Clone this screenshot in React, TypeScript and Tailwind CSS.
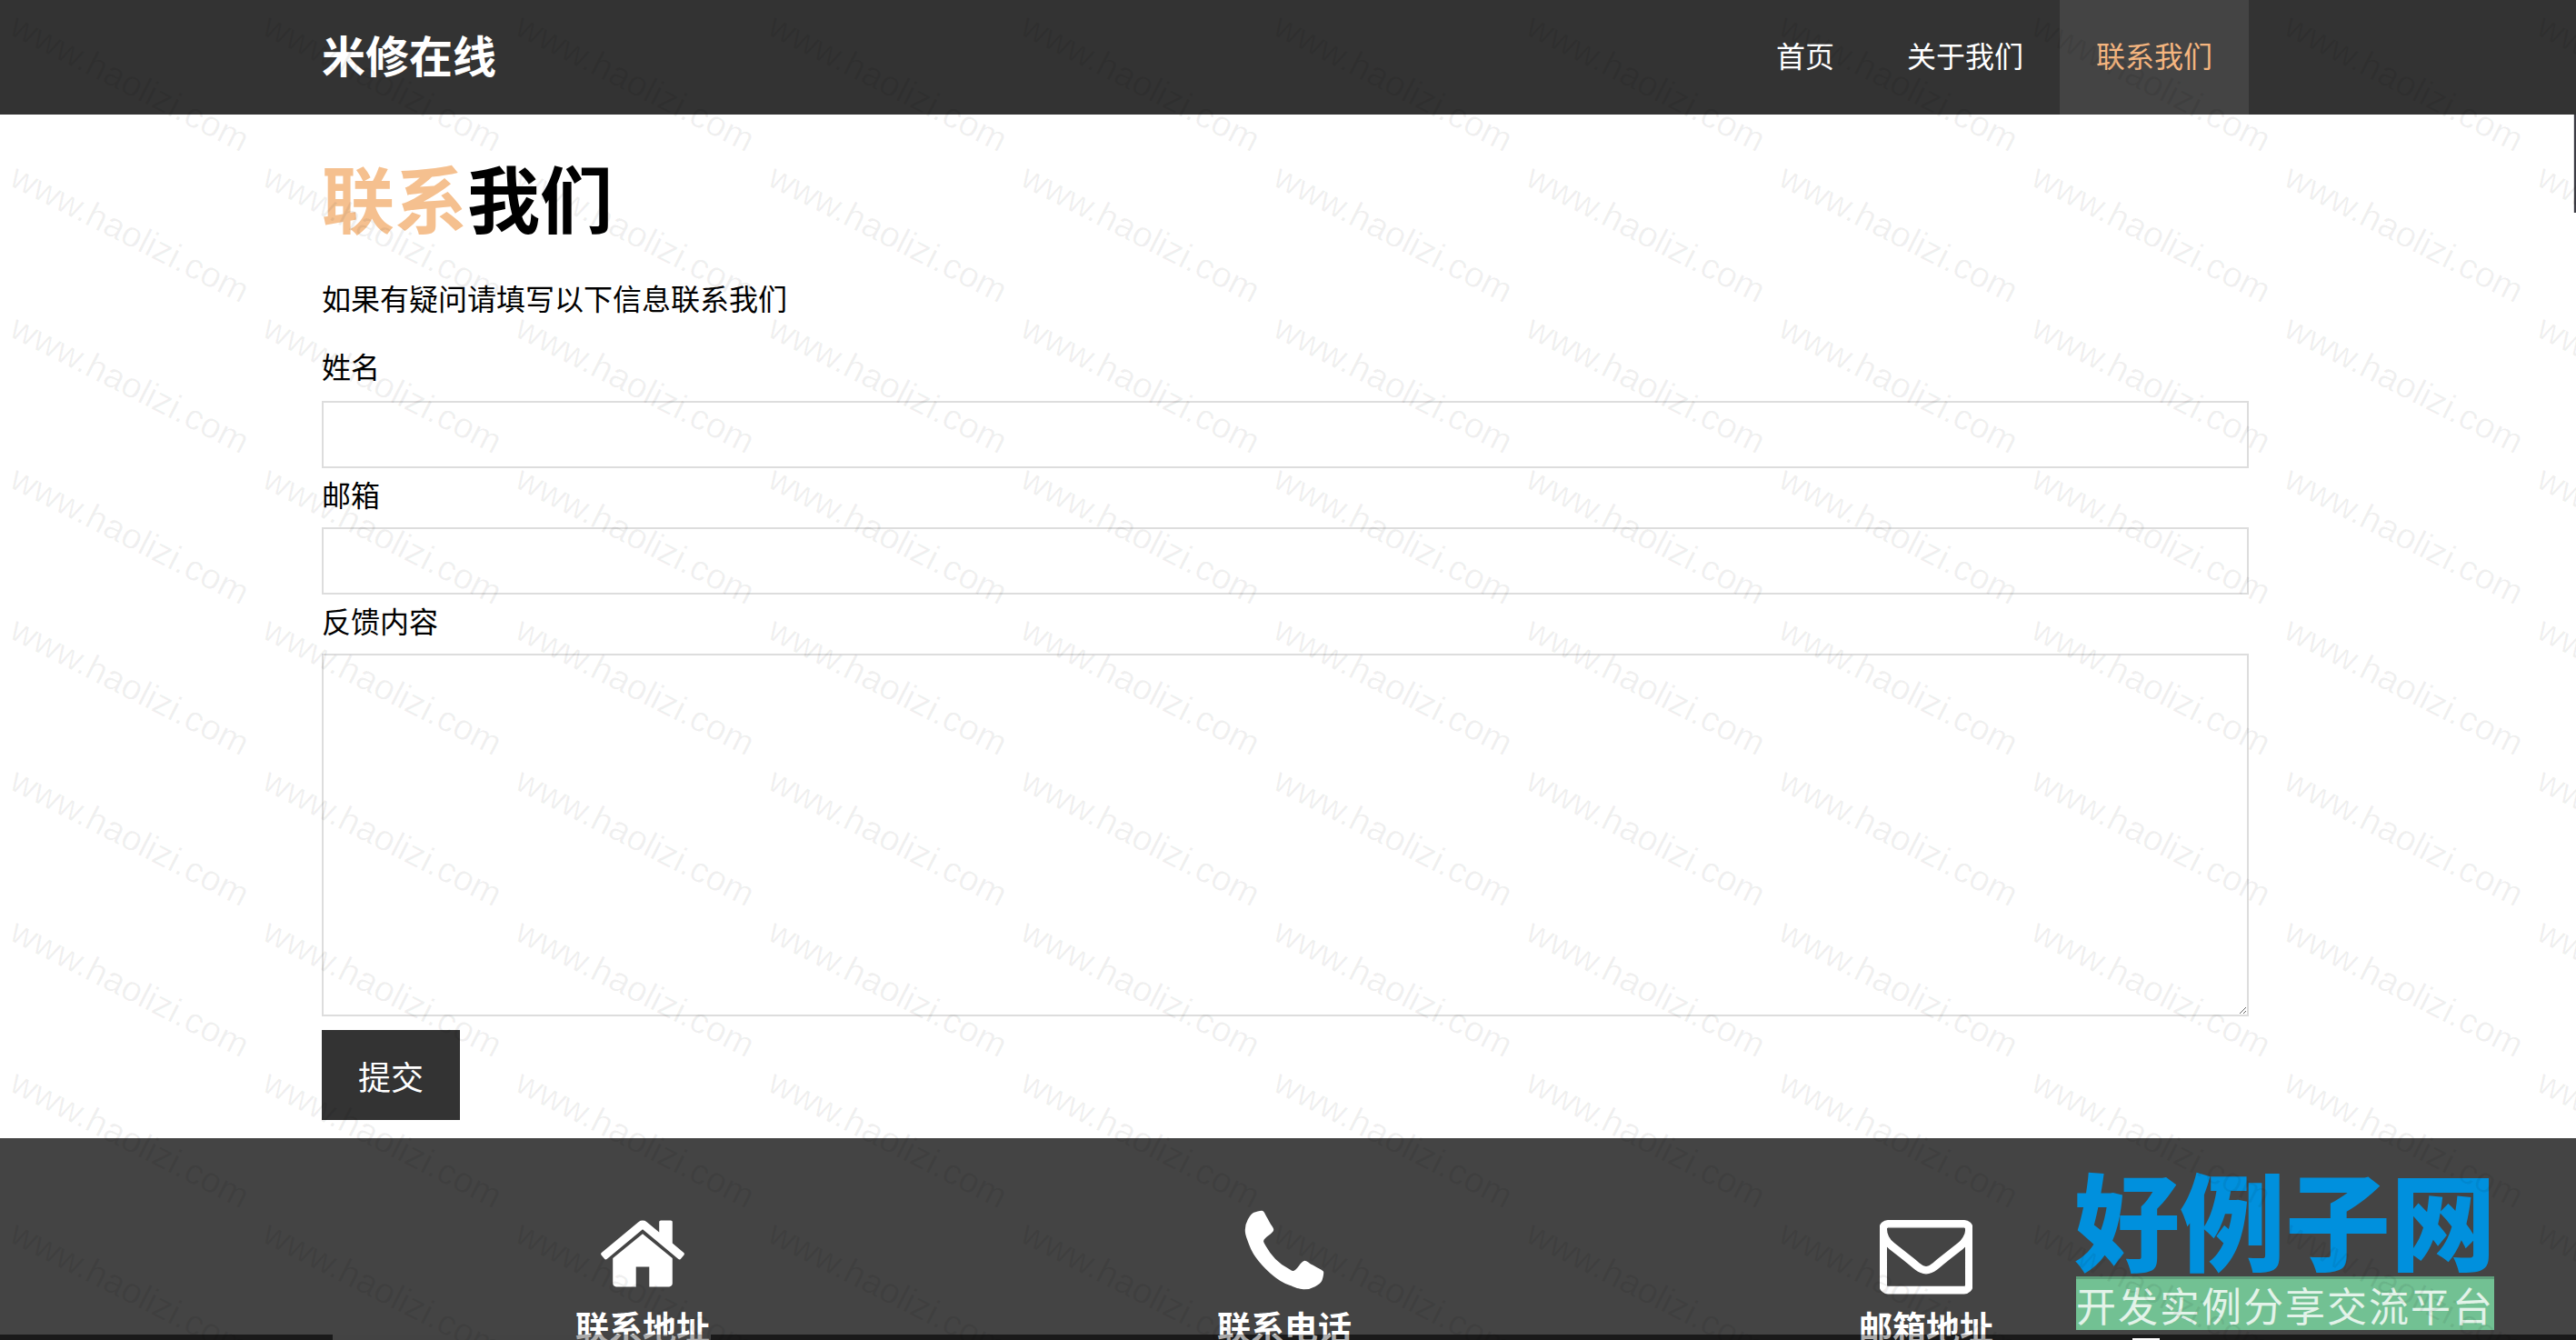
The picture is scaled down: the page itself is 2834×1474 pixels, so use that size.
const marks = Array.from({ length: 99 }, (_, i) => i)

function HomeIcon() {
  return (
    <svg viewBox="0 0 1792 1792" className="w-[102px] h-[102px] fill-white">
      <path d="M1472 992v480q0 26-19 45t-45 19h-384v-384h-256v384h-384q-26 0-45-19t-19-45v-480q0-1 .5-3t.5-3l575-474 575 474q1 2 1 6zm223-69l-62 74q-8 9-21 11h-3q-13 0-21-7l-692-577-692 577q-12 8-24 7-13-2-21-11l-62-74q-8-10-7-23.500t11-21.500l719-599q32-26 76-26t76 26l244 204v-195q0-14 9-23t23-9h192q14 0 23 9t9 23v408l219 182q10 8 11 21.500t-7 23.500z" />
    </svg>
  )
}

function PhoneIcon() {
  return (
    <svg viewBox="0 0 1792 1792" className="w-[110px] h-[110px] fill-white">
      <path d="M1600 1240q0 27-10 70.500t-21 68.500q-21 50-122 106-94 51-186 51-27 0-53-3.500t-57.500-12.500-47-14.500-55.500-20.500-49-18q-98-35-175-83-127-79-264-216t-216-264q-48-77-83-175-3-9-18-49t-20.500-55.500-14.500-47-12.500-57.500-3.500-53q0-92 51-186 56-101 106-122 25-11 68.500-21t70.500-10q14 0 21 3 18 6 53 76 11 19 30 54t35 63.500 31 53.500q3 4 17.500 25t21.500 35.500 7 28.500q0 20-28.500 50t-62 55-62 53-28.500 46q0 9 5 22.500t8.500 20.500 14 24 11.500 19q76 137 174 235t235 174q2 1 19 11.500t24 14 20.500 8.500 22.500 5q18 0 46-28.500t53-62 55-62 50-28.500q14 0 28.500 7t35.500 21.500 25 17.500q25 15 53.500 31t63.500 35 54 30q70 35 76 53 3 7 3 21z" />
    </svg>
  )
}

function EnvelopeIcon() {
  return (
    <svg viewBox="0 0 1792 1792" className="w-[102px] h-[102px] fill-white stroke-white stroke-[24]">
      <path d="M1664 1504v-768q-32 36-69 66-268 206-426 338-51 43-83 67t-86.500 48.500-102.500 24.500h-2q-48 0-102.500-24.500t-86.500-48.500-83-67q-158-132-426-338-37-30-69-66v768q0 13 9.500 22.500t22.500 9.500h1472q13 0 22.500-9.500t9.500-22.500zm0-1051v-24.500l-.5-13-3-12.500-5.500-9-9-7.500-14-2.500h-1472q-13 0-22.500 9.500t-9.500 22.500q0 168 147 284 193 152 401 317 6 5 35 29.500t46 37.500 44.500 31.500 50.500 27.500 43 9h2q20 0 43-9t50.500-27.500 44.500-31.500 46-37.500 35-29.500q208-165 401-317 54-43 100.500-115.500t46.500-131.500zm128-37v1088q0 66-47 113t-113 47h-1472q-66 0-113-47t-47-113v-1088q0-66 47-113t113-47h1472q66 0 113 47t47 113z" />
    </svg>
  )
}

function Nav() {
  return (
    <header className="bg-[#333] pr-[6px]">
      <div className="mx-auto w-[2120px] h-[126px] flex items-center justify-between">
        <span className="text-white text-[48px] leading-[60px] font-bold pb-[8px]">米修在线</span>
        <nav className="flex h-full text-[32px] text-white">
          <a className="px-[40px] pb-[7px] flex items-center">首页</a>
          <a className="px-[40px] pb-[7px] flex items-center">关于我们</a>
          <a className="px-[40px] pb-[7px] flex items-center bg-[#444] text-[#f4b57f]">联系我们</a>
        </nav>
      </div>
    </header>
  )
}

function ContactForm() {
  const field = "block w-full h-[74px] border-2 border-[#ddd] bg-white"
  return (
    <main className="pr-[6px]">
      <div className="mx-auto w-[2120px]">
        <h1 className="h-[181px] text-[80px] leading-[178px] font-bold text-black">
          <span className="text-[#f5c08f]">联系</span>我们
        </h1>
        <p className="text-[32px] leading-[40px] mb-[26px] text-black">如果有疑问请填写以下信息联系我们</p>
        <label className="block h-[68px] text-[32px] leading-[58px] text-black">姓名</label>
        <input className={field} />
        <label className="block h-[65px] text-[32px] leading-[57px] text-black">邮箱</label>
        <input className={field} />
        <label className="block h-[65px] text-[32px] leading-[57px] text-black">反馈内容</label>
        <textarea className="block w-full h-[399px] border-2 border-[#ddd] bg-white" />
        <button className="block mt-[15px] mb-[20px] w-[152px] h-[99px] bg-[#333] text-white text-[36px]">提交</button>
      </div>
    </main>
  )
}

function Footer() {
  const items = [
    { icon: <HomeIcon />, text: "联系地址" },
    { icon: <PhoneIcon />, text: "联系电话" },
    { icon: <EnvelopeIcon />, text: "邮箱地址" },
  ]
  return (
    <footer className="relative h-[222px] bg-[#444] overflow-hidden pt-[82px]">
      {/* bar along the bottom edge */}
      <div className="absolute left-0 right-0 bottom-0 h-[6px] flex">
        <div className="w-[366px] bg-[#272727]" />
        <div className="w-[416px] bg-[#656565]" />
        <div className="flex-1 bg-[#272727]" />
      </div>
      <div className="relative ml-[354px] w-[2118px] grid grid-cols-3">
        {items.map((item) => (
          <div key={item.text} className="flex flex-col items-center">
            <div className="h-[90px] flex items-center justify-center">{item.icon}</div>
            <span className="mt-[12px] text-white text-[37px] leading-[46px] font-bold">{item.text}</span>
          </div>
        ))}
      </div>
      <div className="absolute left-0 right-0 bottom-0 h-[6px] bg-black/33" />
      <div className="absolute left-[2346px] bottom-0 w-[30px] h-[2px] bg-white" />
    </footer>
  )
}

export default function App() {
  return (
    <div className="relative h-[1474px] overflow-hidden bg-white font-['Noto_Sans_CJK_SC',sans-serif]">
      <Nav />
      <ContactForm />
      <Footer />

      {/* site badge */}
      <div className="absolute left-[2284px] top-[1272px] w-[460px]">
        <div className="h-[132px] flex items-center justify-center text-[#0090dd] text-[116px] leading-none font-black whitespace-nowrap">
          好例子网
        </div>
        <div className="h-[59px] bg-[#72c193] border-t-[3px] border-[#5f9f7c] flex items-center justify-center text-white/80 text-[44px] leading-none tracking-[2px] whitespace-nowrap">
          开发实例分享交流平台
        </div>
      </div>

      {/* sliver at the right edge */}
      <div className="absolute right-0 top-[126px] w-[3px] h-[108px] bg-[#3d3d45] border-l border-[#ddd]" />

      {/* watermark */}
      <div className="absolute inset-0 overflow-hidden pointer-events-none">
        <div className="ml-[4px] mt-[7px] grid grid-cols-[repeat(11,278px)] auto-rows-[166px] w-[3058px]">
          {marks.map((i) => (
            <div key={i} className="flex items-center justify-center">
              <span className="rotate-[27deg] font-['Liberation_Sans',sans-serif] text-[39px] leading-none text-black/[0.06] whitespace-nowrap">
                www.haolizi.com
              </span>
            </div>
          ))}
        </div>
      </div>
    </div>
  )
}
